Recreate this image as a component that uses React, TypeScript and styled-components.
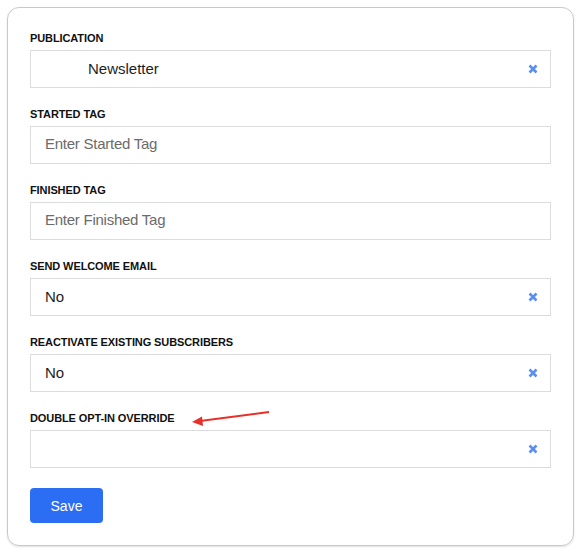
import React from "react";
import styled, { createGlobalStyle } from "styled-components";

const GlobalStyle = createGlobalStyle`
  html, body {
    margin: 0;
    padding: 0;
    background: #ffffff;
    font-family: "Liberation Sans", Arial, sans-serif;
  }
`;

const Page = styled.div`
  padding: 7px 5px 9px 7px;
`;

const Card = styled.form`
  position: relative;
  box-sizing: border-box;
  width: 567px;
  height: 539px;
  border: 1px solid #c9c9c9;
  border-radius: 12px;
  box-shadow: 0 1px 2px rgba(0, 0, 0, 0.12);
  padding: 23px 22px 22px 22px;
  display: flex;
  flex-direction: column;
`;

const FieldList = styled.div`
  display: flex;
  flex-direction: column;
  gap: 19px;
`;

const Field = styled.div`
  display: flex;
  flex-direction: column;
`;

const Label = styled.label`
  font-size: 11px;
  line-height: 14px;
  font-weight: 700;
  color: #111;
  letter-spacing: -0.1px;
  margin-bottom: 5px;
`;

const Box = styled.div`
  box-sizing: border-box;
  height: 38px;
  border: 1px solid #dcdcdc;
  display: flex;
  align-items: center;
  padding: 0 11px 0 14px;
`;

const Value = styled.span<{ $indent?: boolean; $placeholder?: boolean }>`
  flex: 1;
  font-size: 15px;
  line-height: 18px;
  margin-bottom: ${({ $placeholder }) => ($placeholder ? "3px" : "1px")};
  color: ${({ $placeholder }) => ($placeholder ? "#6b6b6b" : "#1e1e1e")};
  letter-spacing: ${({ $placeholder }) => ($placeholder ? "-0.25px" : "0")};
  padding-left: ${({ $indent }) => ($indent ? "43px" : "0")};
`;

const Clear = styled.span`
  display: flex;
  align-items: center;
  justify-content: center;
  width: 12px;
  height: 12px;
`;

const SaveButton = styled.button`
  margin-top: 20px;
  width: 73px;
  height: 35px;
  border: none;
  border-radius: 4px;
  background: #2b6ef3;
  color: #fff;
  font-family: "Liberation Sans", Arial, sans-serif;
  font-size: 14px;
  cursor: pointer;
`;

const Arrow = styled.svg`
  position: absolute;
  left: 176px;
  top: 393px;
`;

const ClearIcon = () => (
  <svg width="10" height="10" viewBox="0 0 10 10">
    <path d="M1.5 1.5 L8.5 8.5 M8.5 1.5 L1.5 8.5" stroke="#5a8ef0" strokeWidth="2.6" strokeLinecap="butt" />
  </svg>
);

type FieldDef = {
  label: string;
  value?: string;
  placeholder?: string;
  indent?: boolean;
  clearable?: boolean;
};

const fields: FieldDef[] = [
  { label: "PUBLICATION", value: "Newsletter", indent: true, clearable: true },
  { label: "STARTED TAG", placeholder: "Enter Started Tag" },
  { label: "FINISHED TAG", placeholder: "Enter Finished Tag" },
  { label: "SEND WELCOME EMAIL", value: "No", clearable: true },
  { label: "REACTIVATE EXISTING SUBSCRIBERS", value: "No", clearable: true },
  { label: "DOUBLE OPT-IN OVERRIDE", value: "", clearable: true },
];

export default function App() {
  return (
    <Page>
      <GlobalStyle />
      <Card onSubmit={(e) => e.preventDefault()}>
        <FieldList>
          {fields.map((f) => (
            <Field key={f.label}>
              <Label>{f.label}</Label>
              <Box>
                <Value $indent={f.indent} $placeholder={!!f.placeholder}>
                  {f.value || f.placeholder}
                </Value>
                {f.clearable && (
                  <Clear>
                    <ClearIcon />
                  </Clear>
                )}
              </Box>
            </Field>
          ))}
        </FieldList>
        <SaveButton type="submit">Save</SaveButton>
        <Arrow width="90" height="30" viewBox="0 0 90 30">
          <path d="M85 11 L16 20" stroke="#e8302a" strokeWidth="2" fill="none" />
          <path d="M8 21 L18 15.5 L19 25 Z" fill="#e8302a" />
        </Arrow>
      </Card>
    </Page>
  );
}
